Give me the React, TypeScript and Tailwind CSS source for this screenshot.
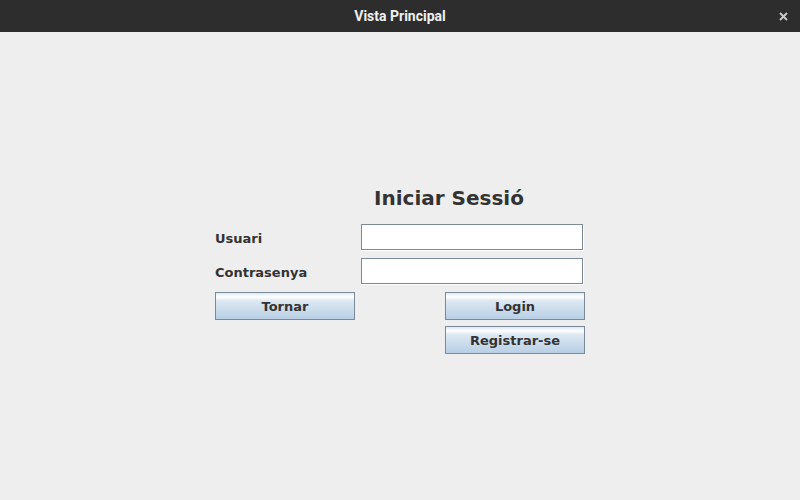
const btn =
  "w-[140px] h-[28px] pt-[2px] border border-[#7a8a99] bg-[linear-gradient(to_bottom,#dde8f3_0%,#ffffff_15%,#dde8f3_30%,#b8cfe5_100%)] text-[13px] font-bold text-[#333333] flex items-center justify-center";

const field =
  "w-[222px] h-[26px] border border-[#7a8a99] bg-white shadow-[1px_1px_0_#ffffff]";

export default function App() {
  return (
    <div className="w-[800px] h-[500px] flex flex-col bg-[#eeeeee] font-['DejaVu_Sans',sans-serif]">
      <div className="h-[32px] bg-[#2d2d2d] flex items-center relative">
        <span className="flex-1 text-center text-[14px] font-bold text-[#f0f0f0] font-['Roboto',sans-serif]">
          Vista Principal
        </span>
        <svg
          className="absolute right-[12px] top-[12px]"
          width="9"
          height="9"
          viewBox="0 0 9 9"
        >
          <path d="M1 1L8 8M8 1L1 8" stroke="#c8c8c8" strokeWidth="2" />
        </svg>
      </div>
      <div className="flex flex-col pl-[215px] pt-[154px] text-[#333333]">
        <div className="ml-[159px] h-[24px] leading-[24px] text-[20px] font-bold">
          Iniciar Sessió
        </div>
        <div className="mt-[14px] flex items-center">
          <span className="w-[146px] pt-[3px] text-[13px] font-bold">Usuari</span>
          <div className={field} />
        </div>
        <div className="mt-[8px] flex items-center">
          <span className="w-[146px] pt-[3px] text-[13px] font-bold">Contrasenya</span>
          <div className={field} />
        </div>
        <div className="mt-[8px] flex gap-[90px]">
          <button className={btn}>Tornar</button>
          <button className={btn}>Login</button>
        </div>
        <div className="mt-[6px] ml-[230px]">
          <button className={btn}>Registrar-se</button>
        </div>
      </div>
    </div>
  );
}
